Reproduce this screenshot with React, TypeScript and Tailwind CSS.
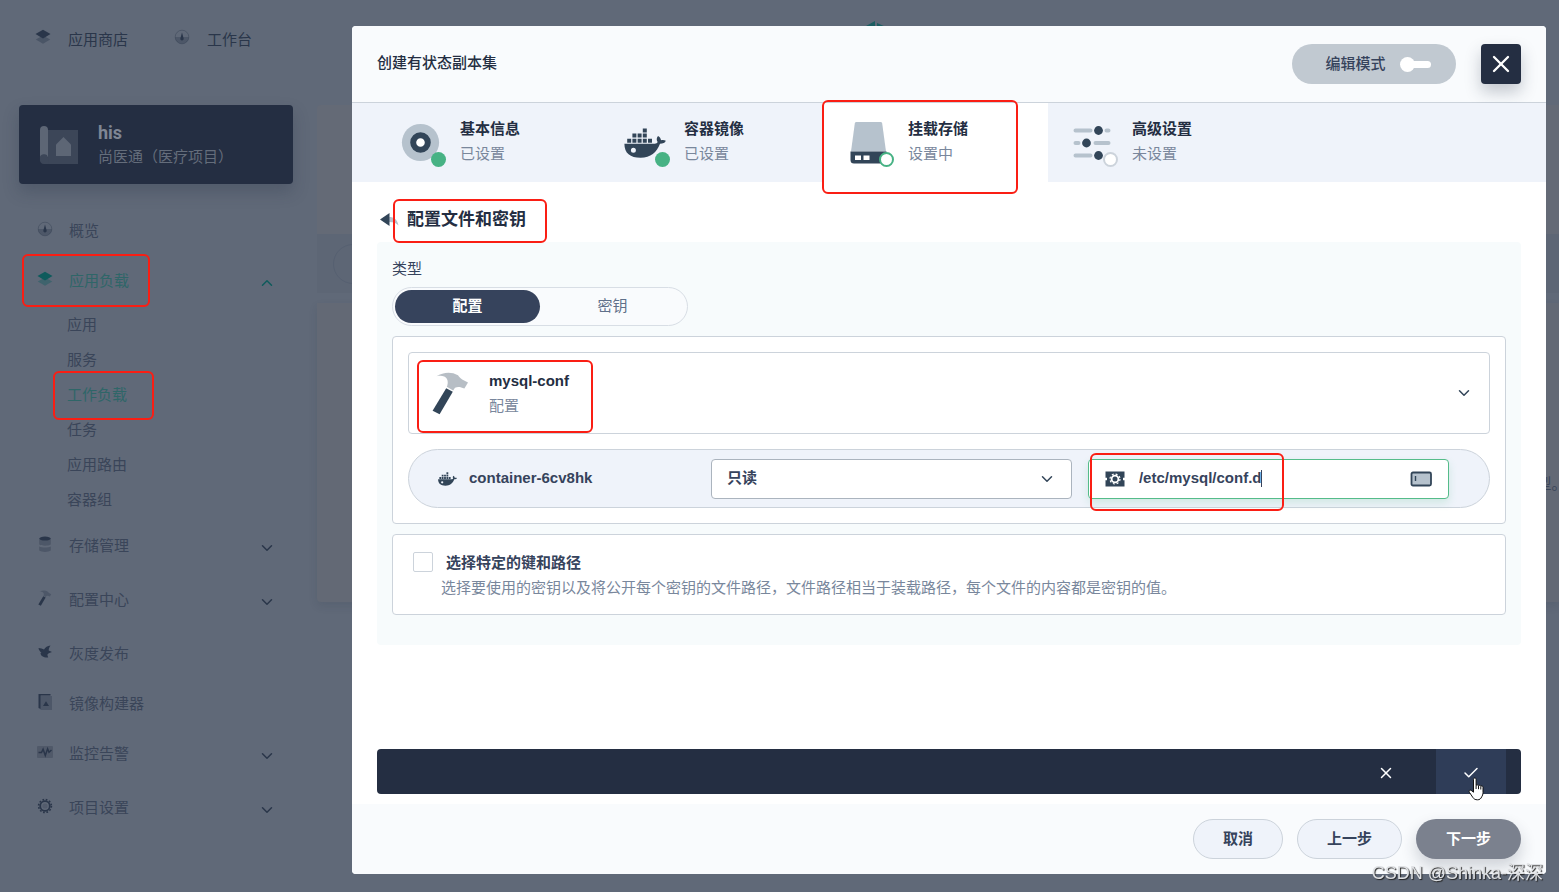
import { useState, type ReactNode } from "react";
import clsx from "clsx";
import { Check, ChevronDown, ChevronUp, X } from "lucide-react";

type IconProps = { className?: string };

function LayersIcon({ className }: IconProps) {
  return (
    <svg viewBox="0 0 16 16" className={className} aria-hidden="true">
      <path d="M.8 10.600 8 6.600l7.200 4L8 14.800z" fill="currentColor" opacity=".4" />
      <path d="M.5 5 8 .8 15.500 5 8 9.400z" fill="currentColor" />
    </svg>
  );
}

function DashboardIcon({ className }: IconProps) {
  return (
    <svg viewBox="0 0 16 16" className={className} aria-hidden="true">
      <circle cx="8" cy="8" r="6.800" fill="none" stroke="currentColor" strokeWidth="1" opacity=".35" />
      <path d="M1.200 8h13.600A6.800 6.800 0 0 1 1.200 8z" fill="currentColor" opacity=".35" />
      <path d="M8 3.600 9.600 9.200a1.700 1.700 0 1 1-3.200 0z" fill="currentColor" />
    </svg>
  );
}

function StorageIcon({ className }: IconProps) {
  return (
    <svg viewBox="0 0 16 16" className={className} aria-hidden="true">
      <path d="M2.200 3.200h11.600v5.400c-2.400 1.600-9.200 1.600-11.600 0zM2.200 10.400c3 1.400 8.600 1.400 11.600 0v4.200c-2.400 1.800-9.200 1.800-11.600 0z" fill="currentColor" opacity=".35" />
      <ellipse cx="8" cy="2.600" rx="5.800" ry="2" fill="currentColor" />
    </svg>
  );
}

function HammerIcon({ className }: IconProps) {
  return (
    <svg viewBox="0 0 40 44" className={className} aria-hidden="true">
      <path d="M5.500 5.200C12 1.200 20 .2 27 4.200c1.200 1.600 2.400 3.200 4.200 4.200l5.800 3.200-3.600 6c-3.400-1.200-6-2.200-9.400-.8l-1.800 2.600-6.400-3.600c1.800-4 1.200-8.600-2.600-10.400-2.400-.8-5-.6-7.700-.2z" fill="currentColor" opacity=".35" />
      <path d="m15.200 17.200 6.600 3.600L8.600 43.200 1.600 39.800z" fill="currentColor" />
    </svg>
  );
}

function BirdIcon({ className }: IconProps) {
  return (
    <svg viewBox="0 0 16 16" className={className} aria-hidden="true">
      <path d="M1.500 4c2.200.4 4 .6 5.500 1.500 1.400-2.200 3.400-3.500 6.500-4-1.500 2.200-1.800 3.700-1.800 5L15 8l-3.300 1.300-1.400 1.500.9 2.700c-4.700.3-7.400-1.500-7.700-4.500l1-.4C2.800 7.400 1.800 6 1.500 4z" fill="currentColor" />
    </svg>
  );
}

function ImageBuilderIcon({ className }: IconProps) {
  return (
    <svg viewBox="0 0 16 16" className={className} aria-hidden="true">
      <path d="M3.500 2h11.500v14H3.500z" fill="currentColor" opacity=".35" />
      <path d="M1.500 0h12v1.600H3.600V15L1.500 14zM6 12 9 7.200l3 4.800z" fill="currentColor" />
    </svg>
  );
}

function MonitorIcon({ className }: IconProps) {
  return (
    <svg viewBox="0 0 16 16" className={className} aria-hidden="true">
      <rect y="2" width="16" height="12" rx="1" fill="currentColor" opacity=".3" />
      <path d="M1.500 8.600h3l1.600-3.400 2.200 6.200 2.300-6.600 1.400 3.400L14.500 6" fill="none" stroke="currentColor" strokeWidth="1.500" />
    </svg>
  );
}

function GearIcon({ className }: IconProps) {
  return (
    <svg viewBox="0 0 16 16" className={className} aria-hidden="true">
      <circle cx="8" cy="8" r="6.400" fill="none" stroke="currentColor" strokeWidth="1.600" strokeDasharray="1.700 1.650" />
      <circle cx="8" cy="8" r="4.800" fill="none" stroke="currentColor" strokeWidth="1.800" />
      <circle cx="8" cy="8" r="2.600" fill="currentColor" opacity=".25" />
    </svg>
  );
}

function ProjectIcon({ className }: IconProps) {
  return (
    <svg viewBox="0 0 40 40" className={className} aria-hidden="true">
      <path d="M9 5h30v34H9z" fill="#3c4658" />
      <path d="M1 5a4 4 0 0 1 8 0v27H1z" fill="#5d6675" />
      <path d="M1 34a4 4 0 0 1 8-1.500L10 39H5a4 4 0 0 1-4-5z" fill="#3c4658" />
      <path d="M17 19.500 24.500 12l7.500 7.500V31H17z" fill="#5d6675" />
    </svg>
  );
}

function DiscIcon({ className }: IconProps) {
  return (
    <svg viewBox="0 0 40 40" className={className} aria-hidden="true">
      <circle cx="20.500" cy="19.500" r="18.600" fill="#b6c2cd" />
      <circle cx="20.500" cy="19.500" r="7.300" fill="#fff" stroke="#324558" strokeWidth="6" />
    </svg>
  );
}

function DockerIcon({ className }: IconProps) {
  return (
    <svg viewBox="0 0 44 44" className={className} aria-hidden="true">
      <path
        d="M5.200 17.800h4v4h-4zM10.400 17.800h4v4h-4zM15.600 17.800h4v4h-4zM20.800 17.800h4v4h-4zM26 17.800h4v4h-4zM10.400 12.600h4v4h-4zM15.600 12.600h4v4h-4zM20.800 12.600h4v4h-4zM20.800 7.400h4v4h-4z"
        fill="currentColor"
      />
      <path
        fillRule="evenodd"
        d="M2.400 22.800h30.400c1.400-.2 2.400-.8 2.800-1.800-1.200-2-1.200-4 .4-6 1.800.8 2.800 2.400 3 4.200 2-.4 3.600-.2 4.800.6-.8 2.200-2.800 3-5.800 3-3.200 8.600-9.400 14-19.400 14-10.400 0-16.200-4.400-16.200-14zm9 4a2.500 2.500 0 1 0 0 5 2.500 2.500 0 0 0 0-5z"
        fill="currentColor"
      />
    </svg>
  );
}

function DiskIcon({ className }: IconProps) {
  return (
    <svg viewBox="-1 0 44 44" className={className} aria-hidden="true">
      <path d="M9.500 1h24c1 0 1.500.5 1.700 1.500L39 30.500H4L7.800 2.500C8 1.500 8.500 1 9.500 1z" fill="#b6c2cd" />
      <path d="M3.500 30.500h36V39a3.500 3.500 0 0 1-3.500 3.500H7A3.500 3.500 0 0 1 3.500 39z" fill="#324558" />
      <path d="M8 34.500h6v4.500H8zM16.500 34.500h6v4.500h-6z" fill="#fff" />
    </svg>
  );
}

function SlidersIcon({ className }: IconProps) {
  return (
    <svg viewBox="0 0 40 40" className={className} aria-hidden="true">
      <path d="M3.500 7.500h15M34.500 7.500h2M3.500 20h3M23.500 20h13M3.500 32.500h15" stroke="#b6c2cd" strokeWidth="4" strokeLinecap="round" />
      <circle cx="26.500" cy="7.500" r="4.400" fill="#324558" />
      <circle cx="14.500" cy="20" r="4.400" fill="#324558" />
      <circle cx="26.500" cy="32.500" r="4.400" fill="#324558" />
    </svg>
  );
}

function BackIcon({ className }: IconProps) {
  return (
    <svg viewBox="0 0 20 16" className={className} aria-hidden="true">
      <path d="M9 5c5 0 8.500 2.500 9.500 8.500C16.500 11 13.500 10 9 10z" fill="#b6c2cd" />
      <path d="M0 7.500 9.500 1v13z" fill="#324558" />
    </svg>
  );
}

function MountIcon({ className }: IconProps) {
  return (
    <svg viewBox="0 0 20 20" className={className} aria-hidden="true">
      <path d="M.5 2.500h19v6.200h-1.500v2.600h1.500v6.200H.5v-6.200H2V8.700H.5z" fill="#324558" />
      <circle cx="10" cy="10" r="5" fill="none" stroke="#fff" strokeWidth="1.200" strokeDasharray="2 1.930" />
      <circle cx="10" cy="10" r="3.400" fill="#324558" stroke="#fff" strokeWidth="1.800" />
    </svg>
  );
}

function KeyboardIcon({ className }: IconProps) {
  return (
    <svg viewBox="0 0 22 16" className={className} aria-hidden="true">
      <rect x="1.500" y="1.500" width="19.500" height="13" rx="1.500" fill="#b6c2cd" stroke="#324558" strokeWidth="1.800" />
      <path d="M5.500 5v5" stroke="#324558" strokeWidth="1.400" />
    </svg>
  );
}

function HandCursor({ className }: IconProps) {
  return (
    <svg viewBox="0 0 18 24" className={className} aria-hidden="true">
      <path
        d="M5.500 2.500c0-2 2.600-2 2.600 0v6c.6-1 2.200-.8 2.400.3.600-.8 2.100-.6 2.300.5.700-.7 2.200-.3 2.200 1v5.200c0 2-.6 3.300-1.300 4.300-.7 2-2.200 3-4.200 3-2.400 0-3.600-.8-4.600-2.300L1.400 15.300c-.9-1.400.3-2.800 1.700-2l2.400 1.900z"
        fill="#fff"
        stroke="#111"
        strokeWidth="1"
      />
      <path d="M8.100 8.500v3.500M10.500 9v3.200M12.800 9.500v3" stroke="#111" strokeWidth="1" />
    </svg>
  );
}

/** Red rounded outline that calls out a part of the screen. */
function Highlight({ className }: { className: string }) {
  return <span className={clsx("pointer-events-none absolute z-10 rounded-md border-2 border-[#fa1e14]", className)} />;
}

type NavItem = {
  label: string;
  icon: (props: IconProps) => ReactNode;
  expandable?: boolean;
  children?: string[];
};

const navItems: NavItem[] = [
  { label: "概览", icon: DashboardIcon },
  { label: "应用负载", icon: LayersIcon, children: ["应用", "服务", "工作负载", "任务", "应用路由", "容器组"] },
  { label: "存储管理", icon: StorageIcon, expandable: true },
  { label: "配置中心", icon: HammerIcon, expandable: true },
  { label: "灰度发布", icon: BirdIcon },
  { label: "镜像构建器", icon: ImageBuilderIcon },
  { label: "监控告警", icon: MonitorIcon, expandable: true },
  { label: "项目设置", icon: GearIcon, expandable: true },
];

const steps = [
  { title: "基本信息", status: "已设置", state: "done", icon: DiscIcon, iconSize: "size-10" },
  { title: "容器镜像", status: "已设置", state: "done", icon: DockerIcon, iconSize: "size-11" },
  { title: "挂载存储", status: "设置中", state: "current", icon: DiskIcon, iconSize: "size-11" },
  { title: "高级设置", status: "未设置", state: "todo", icon: SlidersIcon, iconSize: "size-10" },
];

function Sidebar() {
  return (
    <aside className="w-[317px] shrink-0 pl-[19px] pr-6">
      <nav className="flex h-[105px] gap-[46px] pb-6 pl-4 text-[#2a364a]">
        <a href="#store" className="flex items-center gap-[17px]">
          <LayersIcon className="mb-2 size-4" />
          应用商店
        </a>
        <a href="#workbench" className="flex items-center gap-[17px]">
          <DashboardIcon className="mb-2 size-4" />
          工作台
        </a>
      </nav>

      <div className="flex h-[79px] items-center gap-[19px] rounded bg-[#242e42] pl-5 shadow-[0_8px_16px_rgba(36,46,66,0.25)]">
        <ProjectIcon className="size-10 shrink-0" />
        <div>
          <div className="font-['Roboto'] text-lg leading-6 font-bold text-[#7f8694]">his</div>
          <div className="leading-6 text-[#646d7b]">尚医通（医疗项目）</div>
        </div>
      </div>

      <nav className="mt-[22px] text-[#3a4559]">
        {navItems.map(({ label, icon: Icon, expandable, children }) => (
          <div key={label} className={expandable ? "mb-1" : ""}>
            <a
              href="#nav"
              className={clsx("relative flex h-[50px] items-center pr-[17px] pl-[18px]", children && "text-[#2f6668]")}
            >
              <Icon className={clsx("mr-4 mb-1 size-4", children ? "text-[#0f5b5c]" : "text-[#2a364a]")} />
              <span className="flex-1">{label}</span>
              {expandable && <ChevronDown className="mt-1 size-[18px] text-[#2a364a]" />}
              {children && <ChevronUp className="mt-1 size-[18px] text-[#0f5b5c]" />}
              {children && <Highlight className="-top-0.5 left-[3px] h-[53px] w-[128px]" />}
            </a>
            {children && (
              <ul className="mt-px mb-1 pl-12">
                {children.map((child) => (
                  <li key={child} className="relative h-[35px] leading-[35px]">
                    <a href="#sub" className={child === "工作负载" ? "text-[#2f6668]" : ""}>
                      {child}
                    </a>
                    {child === "工作负载" && <Highlight className="-top-1.5 -left-3.5 h-[49px] w-[101px]" />}
                  </li>
                ))}
              </ul>
            )}
          </div>
        ))}
      </nav>
    </aside>
  );
}

function StepTab({ title, status, state, icon: Icon, iconSize }: (typeof steps)[number]) {
  return (
    <button
      type="button"
      className={clsx("relative flex w-[224px] items-center pl-6 text-left", state === "current" && "bg-white")}
    >
      <span className="relative mr-5 flex size-10 items-center justify-center">
        <Icon className={clsx("shrink-0 text-[#324558]", iconSize)} />
        <span
          className={clsx(
            "absolute -right-1.5 -bottom-1 size-[15px] rounded-full",
            state === "done" && "bg-[#47b284]",
            state === "current" && "border-2 border-[#47b284] bg-white",
            state === "todo" && "border-2 border-[#ccd3db] bg-white",
          )}
        />
      </span>
      <span className="pb-1">
        <span className="block leading-[25px] font-bold text-[#242e42]">{title}</span>
        <span className="block leading-[25px] text-[#79879c]">{status}</span>
      </span>
      {state === "current" && <Highlight className="-top-[3px] -left-0.5 h-[94px] w-[196px]" />}
    </button>
  );
}

function VolumeForm() {
  const [kind, setKind] = useState("config");
  const [path, setPath] = useState("/etc/mysql/conf.d");

  return (
    <div className="rounded bg-[#f7fbfc] px-[15px] pt-[15px] pb-[30px]">
      <div className="mb-1.5 leading-6 text-[#36435c]">类型</div>
      <div
        role="radiogroup"
        aria-label="类型"
        className="flex h-[39px] w-[296px] rounded-full border border-[#d8dee5] bg-[#f9fbfd] p-0.5"
      >
        {[
          { id: "config", label: "配置" },
          { id: "secret", label: "密钥" },
        ].map(({ id, label }) => (
          <label
            key={id}
            className={clsx(
              "relative flex flex-1 items-center justify-center rounded-full",
              kind === id ? "bg-[#36435c] font-bold text-white" : "text-[#5f708a]",
            )}
          >
            <input type="radio" name="kind" className="sr-only" checked={kind === id} onChange={() => setKind(id)} />
            {label}
          </label>
        ))}
      </div>

      <div className="mt-2.5 rounded border border-[#ccd3db] bg-white p-[15px]">
        <button
          type="button"
          aria-haspopup="listbox"
          className="relative flex h-[82px] w-full items-center rounded border border-[#ccd3db] pr-4 pl-[22px] text-left"
        >
          <HammerIcon className="mr-[18px] h-11 w-10 text-[#324558]" />
          <span className="flex-1">
            <span className="block leading-[25px] font-bold text-[#242e42]">mysql-conf</span>
            <span className="block leading-[25px] text-[#79879c]">配置</span>
          </span>
          <ChevronDown className="size-[18px] text-[#324558]" />
          <Highlight className="top-[7px] left-2 h-[73px] w-[176px]" />
        </button>

        <div className="mt-[15px] grid h-[59px] grid-cols-[5fr_7fr_7fr] items-center gap-4 rounded-full border border-[#ccd3db] bg-[#eff3fa] pr-10 pl-7">
          <div className="flex items-center gap-3">
            <DockerIcon className="size-5 text-[#324558]" />
            <span className="font-bold text-[#36435c]">container-6cv8hk</span>
          </div>
          <div className="relative">
            <select
              aria-label="读写权限"
              className="h-10 w-full appearance-none rounded border border-[#abb4be] bg-white px-[15px] font-bold text-[#36435c]"
            >
              <option>只读</option>
              <option>读写</option>
            </select>
            <ChevronDown className="pointer-events-none absolute top-[11px] right-4 size-[18px] text-[#324558]" />
          </div>
          <div className="relative flex h-10 items-center rounded border border-[#55bc8a] bg-white px-4 shadow-[0_4px_8px_rgba(85,188,138,0.2)]">
            <MountIcon className="mr-3.5 size-5 shrink-0" />
            <input
              aria-label="挂载路径"
              className="field-sizing-content max-w-full font-bold text-[#36435c] outline-none"
              value={path}
              onChange={(e) => setPath(e.target.value)}
            />
            <span className="h-[17px] w-px bg-[#36435c]" />
            <KeyboardIcon className="ml-auto h-4 w-[22px] shrink-0" />
            <Highlight className="-top-[7px] left-px h-[58px] w-[194px]" />
          </div>
        </div>
      </div>

      <div className="mt-2.5 flex h-[81px] items-start rounded border border-[#ccd3db] bg-white px-5 pt-[15px]">
        <input
          id="specific-keys"
          type="checkbox"
          aria-describedby="specific-keys-desc"
          className="mt-0.5 size-5 shrink-0 appearance-none rounded-xs border border-[#ccd3db] bg-white checked:bg-[#36435c]"
        />
        <div className="pl-2">
          <label htmlFor="specific-keys" className="block pl-[5px] leading-[25px] font-bold text-[#36435c]">
            选择特定的键和路径
          </label>
          <p id="specific-keys-desc" className="leading-[25px] text-[#79879c]">
            选择要使用的密钥以及将公开每个密钥的文件路径，文件路径相当于装载路径，每个文件的内容都是密钥的值。
          </p>
        </div>
      </div>
    </div>
  );
}

function CreateModal() {
  return (
    <div
      role="dialog"
      aria-label="创建有状态副本集"
      className="fixed top-[26px] right-[13px] bottom-[18px] left-[352px] flex flex-col overflow-hidden rounded bg-white"
    >
      <header className="flex h-[77px] shrink-0 items-center border-b border-[#ccd3db] bg-[#f9fbfd] px-[25px]">
        <h1 className="flex-1 pb-0.5 font-medium text-[#242e42]">创建有状态副本集</h1>
        <button
          type="button"
          role="switch"
          aria-checked="false"
          className="mr-[25px] flex h-10 w-[164px] items-center justify-center gap-3.5 rounded-full bg-[#c1c9d1] pl-2 font-medium text-[#36435c]"
        >
          编辑模式
          <span className="flex items-center">
            <span className="size-[15px] rounded-full bg-white" />
            <span className="-ml-1 h-[7px] w-5 rounded-full bg-white" />
          </span>
        </button>
        <button
          type="button"
          aria-label="关闭"
          className="flex size-10 items-center justify-center rounded bg-[#242e42] text-white shadow-[0_8px_16px_rgba(36,46,66,0.25)]"
        >
          <X className="size-7" strokeWidth={2} />
        </button>
      </header>

      <div className="flex h-[79px] shrink-0 bg-[#eff3fa] pl-6">
        {steps.map((step) => (
          <StepTab key={step.title} {...step} />
        ))}
      </div>

      <div className="flex flex-1 flex-col overflow-auto px-[25px] pb-[10px]">
        <div className="flex h-[60px] shrink-0 items-center pt-6 pb-[9px] pl-[3px]">
          <button type="button" aria-label="返回" className="mr-[7px]">
            <BackIcon className="h-4 w-5" />
          </button>
          <h2 className="relative text-[17px] leading-6 font-bold text-[#242e42]">
            配置文件和密钥
            <Highlight className="-top-[9px] -left-3.5 h-11 w-[154px]" />
          </h2>
        </div>

        <VolumeForm />

        <div className="mt-auto flex h-[45px] shrink-0 items-stretch justify-end rounded bg-[#242e42] pr-[15px] text-white">
          <button type="button" aria-label="放弃" className="mr-3.5 flex w-[72px] items-center justify-center pt-0.5">
            <X className="size-[18px]" />
          </button>
          <button type="button" aria-label="确定" className="relative flex w-[70px] items-center justify-center bg-[#2f3d58] pt-0.5">
            <Check className="size-[18px]" />
            <HandCursor className="absolute top-[28px] left-8 z-20 h-6 w-[18px]" />
          </button>
        </div>
      </div>

      <footer className="flex h-[70px] shrink-0 items-center justify-end gap-3.5 bg-[#f9fbfd] px-[25px] font-bold text-[#36435c]">
        <button type="button" className="h-10 rounded-full border border-[#ccd3db] bg-[#eff3fa] px-[29px]">
          取消
        </button>
        <button type="button" className="h-10 rounded-full border border-[#ccd3db] bg-[#eff3fa] px-[29px]">
          上一步
        </button>
        <button
          type="button"
          className="h-10 rounded-full bg-[#7b818e] px-[30px] text-white shadow-[0_8px_16px_rgba(36,46,66,0.2)]"
        >
          下一步
        </button>
      </footer>
    </div>
  );
}

export default function App() {
  return (
    <div className="flex h-screen overflow-hidden bg-[#606978] font-['Liberation_Sans','Noto_Sans_CJK_SC',sans-serif] text-[15px]">
      <Sidebar />
      <main className="flex flex-1 flex-col">
        <div className="flex h-[105px] shrink-0 justify-center">
          <svg viewBox="0 0 24 24" className="mt-5 mr-[124px] size-6" aria-hidden="true">
            <path d="M11 1v22L2 18V6zM13 3l9 4-9 4z" fill="#1c5e62" />
          </svg>
        </div>
        <div className="h-[129px] shrink-0 rounded-tl bg-[#646a76]" />
        <div className="flex h-[59px] shrink-0 items-center bg-[#5d6675] pl-4">
          <div className="h-10 w-60 rounded-full border border-[#566071]" />
        </div>
        <div className="mt-2.5 flex h-[299px] shrink-0 items-center justify-end rounded-bl bg-[#636975] pt-16 text-[#3a4559] shadow-[0_4px_8px_rgba(36,46,66,0.12)]">
          <span className="[font-feature-settings:'halt']">类型。</span>
        </div>
      </main>
      <CreateModal />
      <div className="fixed right-4 bottom-[7px] z-30 text-lg leading-6 text-[#dfe1e4] [text-shadow:1px_1px_1px_#222]">
        CSDN @Shinka-深深
      </div>
    </div>
  );
}
